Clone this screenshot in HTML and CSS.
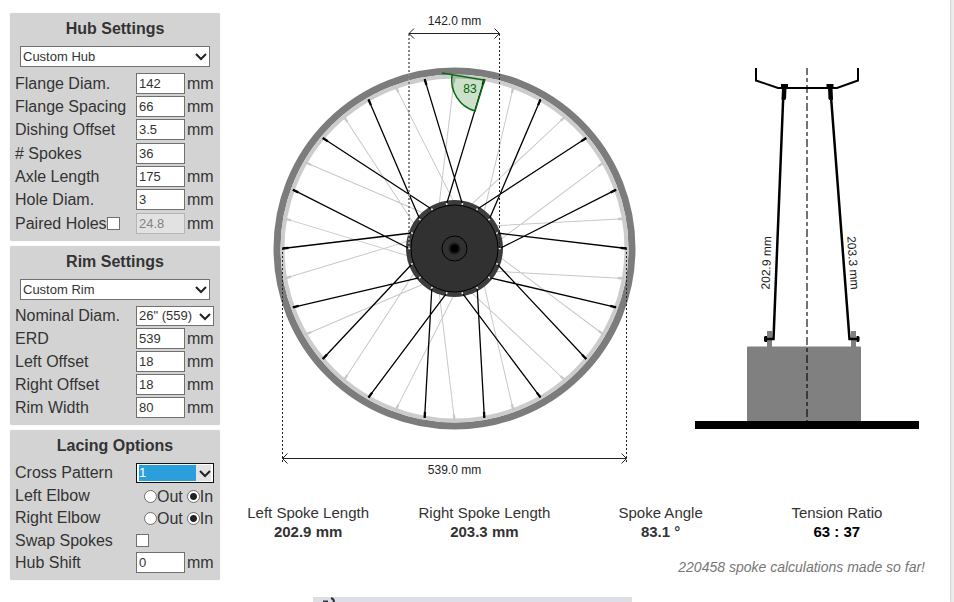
FILE: index.html
```html
<!DOCTYPE html>
<html lang="en">
<head>
<meta charset="utf-8">
<title>Spoke Calculator</title>
<link rel="stylesheet" href="styles.css">
</head>
<body>
<div class="page">
  <div class="calculator">
    <form class="sidebar">
      <section class="panel">
        <h2>Hub Settings</h2>
        <div class="select preset">
          <select aria-label="Hub"><option>Custom Hub</option></select>
          <svg viewBox="0 0 12 8"><path d="M1 1l5 5 5-5"/></svg>
        </div>
        <div class="fields hub">
          <div class="row"><label for="flange">Flange Diam.</label><input id="flange" type="text" value="142"><span>mm</span></div>
          <div class="row"><label for="spacing">Flange Spacing</label><input id="spacing" type="text" value="66"><span>mm</span></div>
          <div class="row"><label for="dish">Dishing Offset</label><input id="dish" type="text" value="3.5"><span>mm</span></div>
          <div class="row"><label for="spokes"># Spokes</label><input id="spokes" type="text" value="36"></div>
          <div class="row"><label for="axle">Axle Length</label><input id="axle" type="text" value="175"><span>mm</span></div>
          <div class="row"><label for="hole">Hole Diam.</label><input id="hole" type="text" value="3"><span>mm</span></div>
          <div class="row"><div class="paired"><label for="paired">Paired Holes</label><input id="paired" type="checkbox"></div><input type="text" value="24.8" aria-label="Paired hole distance" disabled><span>mm</span></div>
        </div>
      </section>
      <section class="panel">
        <h2>Rim Settings</h2>
        <div class="select preset">
          <select aria-label="Rim"><option>Custom Rim</option></select>
          <svg viewBox="0 0 12 8"><path d="M1 1l5 5 5-5"/></svg>
        </div>
        <div class="fields">
          <div class="row"><label for="nominal">Nominal Diam.</label>
            <div class="select wide"><select id="nominal"><option>26" (559)</option></select><svg viewBox="0 0 12 8"><path d="M1 1l5 5 5-5"/></svg></div></div>
          <div class="row"><label for="erd">ERD</label><input id="erd" type="text" value="539"><span>mm</span></div>
          <div class="row"><label for="loff">Left Offset</label><input id="loff" type="text" value="18"><span>mm</span></div>
          <div class="row"><label for="roff">Right Offset</label><input id="roff" type="text" value="18"><span>mm</span></div>
          <div class="row"><label for="rimw">Rim Width</label><input id="rimw" type="text" value="80"><span>mm</span></div>
        </div>
      </section>
      <section class="panel">
        <h2>Lacing Options</h2>
        <div class="lacing">
          <div class="row"><label for="cross">Cross Pattern</label>
            <div class="select wide active"><select id="cross"><option>1</option></select><svg viewBox="0 0 12 8"><path d="M1 1l5 5 5-5"/></svg></div></div>
          <div class="row"><span>Left Elbow</span><div class="choices"><label><input type="radio" name="left">Out</label><label><input type="radio" name="left" checked>In</label></div></div>
          <div class="row"><span>Right Elbow</span><div class="choices"><label><input type="radio" name="right">Out</label><label><input type="radio" name="right" checked>In</label></div></div>
          <div class="row"><label for="swap">Swap Spokes</label><input id="swap" type="checkbox"></div>
          <div class="row"><label for="shift">Hub Shift</label><input id="shift" type="text" value="0"><span>mm</span></div>
        </div>
      </section>
    </form>

    <main class="main">
      <div class="drawings">
        <svg class="wheel" viewBox="220 0 445 488" role="img" aria-label="Wheel front view">
          <defs>
            <g id="pair">
              <path d="M172 0L42.6-15.5M161.6-58.8L45.3 0"/>
              <path class="nipple" d="M172 0l-6-.7M161.6-58.8l-5.400 2.700"/>
            </g>
            <g id="lacing">
              <use href="#pair"/><use href="#pair" transform="rotate(-40)"/><use href="#pair" transform="rotate(-80)"/>
              <use href="#pair" transform="rotate(-120)"/><use href="#pair" transform="rotate(-160)"/><use href="#pair" transform="rotate(-200)"/>
              <use href="#pair" transform="rotate(-240)"/><use href="#pair" transform="rotate(-280)"/><use href="#pair" transform="rotate(-320)"/>
            </g>
          </defs>
          <g transform="translate(454.5 248.5)">
            <circle class="rim-outer" r="177.5"/>
            <circle class="rim-inner" r="172"/>
            <use class="spokes-back" href="#lacing" transform="rotate(-10)"/>
            <circle r="48.500" fill="#3d3d3d"/>
            <circle r="43.500" fill="#313131" stroke="#000"/>
            <circle r="12.500" fill="none" stroke="#000"/>
            <circle r="6" fill="#1c1c1c"/><circle r="4" fill="#000"/>
            <use class="spokes-front" href="#lacing"/>
            <circle class="holes" r="45.300" pathLength="180"/>
          </g>
          <path class="dots-soft" d="M409 34V248"/>
          <path class="dots" d="M499.500 34V248M282.500 248V463M626.500 248V463"/>
          <path class="arrow" d="M409 33.500H499.500M414 28.500l-5 5 5 5M494.500 28.500l5 5-5 5M282.500 458.500H626.500M287.500 453.500l-5 5 5 5M621.500 453.500l5 5-5 5"/>
          <path d="M484.500 80L452 75A32.500 32.500 0 0 0 475 111Z" fill="#006400" fill-opacity=".2"/>
          <path class="angle" d="M442 73L484.500 80L475 111A32.500 32.500 0 0 1 452 75"/>
          <text class="dim" x="454.500" y="25">142.0 mm</text>
          <text class="dim" x="454.500" y="474">539.0 mm</text>
          <text class="dim green" x="470" y="93">83</text>
        </svg>
        <svg class="side" viewBox="665 0 260 488" role="img" aria-label="Wheel side view">
          <rect x="747" y="346.500" width="114" height="76" rx="1" fill="#808080"/>
          <path d="M767 331h5v16h-5zM851 331h5v16h-5z" fill="#808080"/>
          <path d="M807 68V421" stroke="#000" stroke-opacity=".55" stroke-width="2" stroke-dasharray="8 3 4 3" stroke-dashoffset="1"/>
          <path d="M695 421h224v8H695z"/>
          <path d="M756 68V80.500L778 88H837L858 80.500V68" fill="none" stroke="#000" stroke-width="2"/>
          <path d="M783.500 90L773.500 339H765M830.500 90L849.500 339H859" fill="none" stroke="#000" stroke-width="2.500"/>
          <path d="M764 337l1-1h2v6h-2l-1-1zM859.500 337l-1-1h-2v6h2l1-1zM781 84h7v3l-1.500 1-.5 11-1 1h-3l-.5-1 .5-11-1-1zM826.500 84h7v3l-1 1 .5 11-.5 1h-3l-1-1-.5-11-1.500-1z"/>
          <text class="dim" transform="translate(770.500 263) rotate(-88)">202.9 mm</text>
          <text class="dim" transform="translate(849 263) rotate(86)">203.3 mm</text>
        </svg>
      </div>
      <dl class="results">
        <div><dt>Left Spoke Length</dt><dd>202.9 mm</dd></div>
        <div><dt>Right Spoke Length</dt><dd>203.3 mm</dd></div>
        <div><dt>Spoke Angle</dt><dd>83.1 °</dd></div>
        <div><dt>Tension Ratio</dt><dd class="ratio">63 : 37</dd></div>
      </dl>
      <p class="count">220458 spoke calculations made so far!</p>
    </main>
  </div>
  <div class="banner">
    <svg viewBox="0 0 20 5"><path d="M2 4.500h5M10 1q3 1 3 4" fill="none" stroke="#33333f" stroke-width="2"/></svg>
  </div>
</div>
</body>
</html>
```

FILE: styles.css
```css
* { box-sizing: border-box; }

body {
  margin: 0;
  background: #ececec;
  color: #333;
  font: 16px/19px "Liberation Sans", Arial, sans-serif;
}

.page {
  display: flex;
  flex-direction: column;
  justify-content: space-between;
  min-height: 100vh;
  margin-right: 4px;
  background: #fff;
  box-shadow: 0 0 2px #aaa;
}

.calculator {
  display: flex;
  align-items: flex-start;
  padding: 0 25px 0 10px;
}

.sidebar {
  display: flex;
  flex: none;
  flex-direction: column;
  gap: 5px;
  width: 210px;
  padding-top: 13px;
}

.panel {
  padding: 0 5px 6px;
  border-radius: 2px;
  background: #d3d3d3;
  box-shadow: 0 0 1px #ccc;
}

.panel h2 {
  margin: 0;
  font-size: 16px;
  line-height: 31px;
  text-align: center;
}

.fields { margin-top: 4px; }

.row {
  display: grid;
  grid-template-columns: 121px 49px 1fr;
  align-items: center;
  height: 23px;
  white-space: nowrap;
}

.hub .row:nth-child(3n+1) { height: 24px; }

.lacing .row:nth-child(even) { height: 22px; }

.row > input + span { padding-left: 2px; }

input,
select {
  margin: 0;
  border: 1px solid #707070;
  border-radius: 0;
  background: #fff;
  color: #333;
  font: 13px "Liberation Sans", Arial, sans-serif;
  appearance: none;
}

input[type="text"] {
  width: 100%;
  height: 21px;
  padding: 0 2px;
}

input:disabled {
  border-color: #b5b5b5;
  background: #e2e2e2;
  color: #838383;
}

input[type="checkbox"] {
  width: 13px;
  height: 13px;
}

input[type="radio"] {
  width: 13px;
  height: 13px;
  border-radius: 50%;
}

input[type="radio"]:checked {
  background: radial-gradient(circle, #222 3px, #fff 4px);
}

.paired,
.choices,
.choices label {
  display: flex;
  align-items: center;
}

.choices {
  grid-column: 2 / 4;
  gap: 4px;
  padding: 2px 0 0 8px;
}

.select { position: relative; }

.select select {
  display: block;
  width: 100%;
  height: 21px;
  padding: 0 2px;
}

.select svg {
  position: absolute;
  top: 7px;
  right: 3px;
  width: 12px;
  height: 8px;
  fill: none;
  stroke: #222;
  stroke-width: 2;
  pointer-events: none;
}

.preset { margin: 2px 5px 0; }

.wide {
  grid-column: 2 / 4;
  width: 78px;
}

.wide select { height: 20px; }

.active select {
  padding: 1px 2px;
  border-color: #111;
  background: linear-gradient(to right, #2a9fdc 57px, #e3e3e3 57px) content-box, #fff;
  color: #fff;
}

.main {
  flex: 1;
  min-width: 0;
}

.drawings { display: flex; }

.wheel { flex: 445 1 0; min-width: 0; }
.side { flex: 260 1 0; min-width: 0; }

.rim-outer { fill: none; stroke: #7c7c7c; stroke-width: 7; }
.rim-inner { fill: none; stroke: #ccc; stroke-width: 4; }
.spokes-back { stroke: #c8c8c8; stroke-width: 1; }
.spokes-front { stroke: #000; stroke-width: 1.3; }
.nipple { stroke-width: 2.3; }

.holes {
  fill: none;
  stroke: #eee;
  stroke-width: 2;
  stroke-dasharray: 1 9;
  stroke-dashoffset: 0.5;
}

.dots { fill: none; stroke: #222; stroke-dasharray: 2 2; }
.dots-soft { stroke: #888; stroke-width: 2; stroke-dasharray: 2 2; }
.arrow { fill: none; stroke: #222; }
.angle { fill: none; stroke: #066b10; stroke-width: 1.5; }

.dim {
  fill: #222;
  font-size: 12px;
  text-anchor: middle;
}

.green { fill: #006400; }

.results {
  display: grid;
  grid-template-columns: repeat(4, 1fr);
  margin: 15px 0 0;
  font-size: 15px;
  text-align: center;
}

.results dd {
  margin: 0;
  font-weight: bold;
}

.ratio { color: #000; }

.count {
  margin: 17px 0 0;
  color: #777;
  font-size: 14px;
  font-style: italic;
  text-align: right;
}

.banner {
  width: 319px;
  height: 5px;
  margin-left: 313px;
  background: #dedee6;
}

.banner svg {
  display: block;
  width: 20px;
  height: 5px;
  margin-left: 8px;
}
```
